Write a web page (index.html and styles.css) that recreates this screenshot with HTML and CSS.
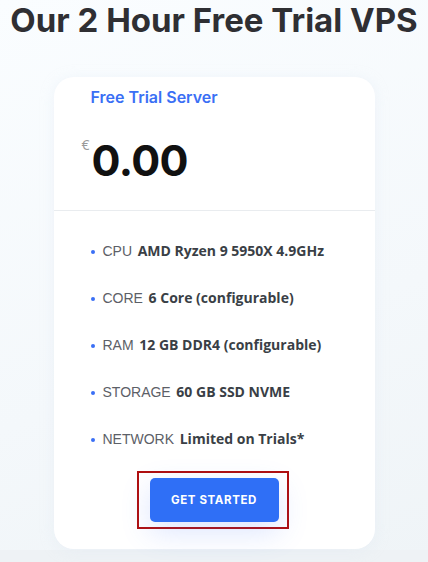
FILE: index.html
```html
<!DOCTYPE html>
<html>
<head>
<meta charset="utf-8">
<link rel="stylesheet" href="styles.css">
</head>
<body>
<div class="page">
  <h1 class="title">Our 2 Hour Free Trial VPS</h1>
  <div class="card">
    <div class="card-head">
      <div class="plan">Free Trial Server</div>
      <div class="price"><span class="cur">€</span><span class="amount">0.00</span></div>
    </div>
    <ul class="specs">
      <li><span class="lbl">CPU</span> <b>AMD Ryzen 9 5950X 4.9GHz</b></li>
      <li><span class="lbl">CORE</span> <b>6 Core (configurable)</b></li>
      <li><span class="lbl">RAM</span> <b>12 GB DDR4 (configurable)</b></li>
      <li><span class="lbl">STORAGE</span> <b>60 GB SSD NVME</b></li>
      <li><span class="lbl">NETWORK</span> <b>Limited on Trials*</b></li>
    </ul>
    <div class="cta">
      <div class="focus"><a class="btn" href="#">GET STARTED</a></div>
    </div>
  </div>
</div>
<div class="band"></div>
</body>
</html>
```

FILE: styles.css
```css
html, body {
  margin: 0;
  padding: 0;
}
body {
  background: linear-gradient(160deg, #fafdff 0%, #f4f8fb 60%, #eff4f7 100%);
  height: 562px;
  overflow: hidden;
  font-family: "Open Sans", "Noto Sans", sans-serif;
}
.page {
  height: 550px;
  display: flex;
  flex-direction: column;
  align-items: center;
}
.title {
  margin: 0;
  font-family: Inter, "Liberation Sans", sans-serif;
  font-weight: 700;
  font-size: 33px;
  line-height: 40px;
  color: #2f2f33;
  letter-spacing: 0;
}
.card {
  margin-top: 37px;
  width: 321px;
  height: 472px;
  background: #fff;
  border-radius: 20px;
  box-sizing: border-box;
  display: flex;
  flex-direction: column;
  box-shadow: 0 2px 14px rgba(220, 230, 240, 0.35);
}
.card-head {
  padding: 10px 37px 0 37px;
  height: 134px;
  box-sizing: border-box;
  border-bottom: 1px solid #e9ecef;
}
.plan {
  font-family: Inter, "Liberation Sans", sans-serif;
  font-weight: 600;
  font-size: 16px;
  line-height: 20px;
  color: #3a6ff5;
}
.price {
  margin-top: 29px;
  margin-left: -9px;
  display: flex;
  align-items: flex-start;
}
.cur {
  font-family: "Open Sans", sans-serif;
  font-size: 14px;
  color: #999;
  line-height: 16px;
  margin-top: 1px;
}
.amount {
  font-family: Inter, "Liberation Sans", sans-serif;
  font-weight: 700;
  font-size: 43px;
  line-height: 48px;
  color: #111;
  margin-left: 2px;
  letter-spacing: -0.6px;
}
.specs {
  list-style: none;
  margin: 0;
  padding: 31px 0 0 37px;
  display: flex;
  flex-direction: column;
  gap: 29px;
}
.specs li {
  font-size: 14px;
  line-height: 18px;
  color: #555a60;
  white-space: nowrap;
}
.specs li::before {
  content: "";
  display: inline-block;
  vertical-align: middle;
  width: 4px;
  height: 4px;
  border-radius: 50%;
  background: #3a6ff5;
  margin-right: 8px;
  margin-top: -1px;
}
.lbl {
  font-family: "Liberation Sans", Arial, sans-serif;
  font-weight: 400;
  color: #5c6067;
  margin-right: 2px;
}
.specs b {
  font-weight: 700;
  color: #3a3f46;
}
.cta {
  margin-top: auto;
  padding-bottom: 20px;
  display: flex;
  justify-content: center;
}
.focus {
  border: 2px solid #b00f0f;
  padding: 5px 8px 5px 11px;
  margin-right: 3px;
}
.btn {
  display: flex;
  align-items: center;
  justify-content: center;
  width: 129px;
  height: 44px;
  background: #2f6ff6;
  border-radius: 5px;
  color: #fff;
  text-decoration: none;
  font-family: Inter, "Liberation Sans", sans-serif;
  font-weight: 700;
  font-size: 11.5px;
  letter-spacing: 0.6px;
  box-shadow: 0 10px 30px rgba(60, 110, 250, 0.18);
}
.band {
  height: 12px;
  background: #eef2f5;
}
```
